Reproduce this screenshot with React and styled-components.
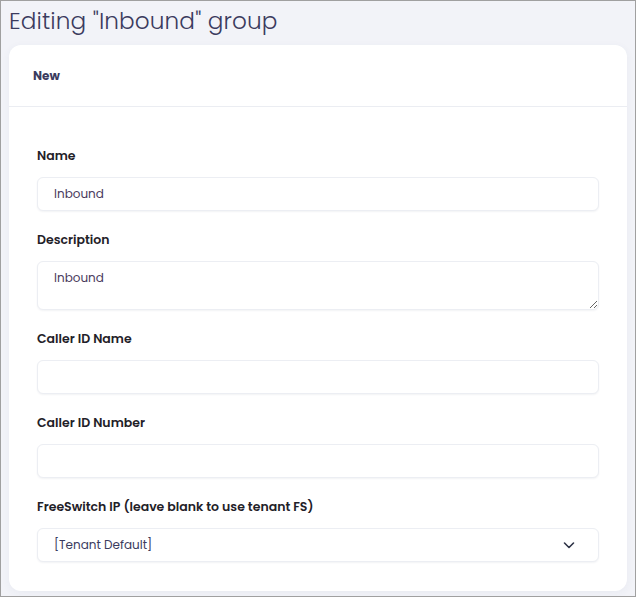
import styled, { createGlobalStyle } from 'styled-components';

const GlobalStyle = createGlobalStyle`
  html, body {
    margin: 0;
    padding: 0;
    background: #f2f3f8;
  }
  body {
    font-family: Poppins, "Noto Sans", "Open Sans", sans-serif;
  }
`;

const Page = styled.div`
  box-sizing: border-box;
  width: 636px;
  height: 597px;
  border: 1px solid #a0a0a0;
  background: #f2f3f8;
  padding: 0 8px;
  overflow: hidden;
`;

const Title = styled.h1`
  margin: 0;
  height: 44px;
  padding-top: 4px;
  box-sizing: border-box;
  font-size: 23.2px;
  font-weight: 300;
  color: #3b3b5e;
  line-height: 32px;
  letter-spacing: 0.1px;
`;

const Card = styled.div`
  background: #fff;
  border-radius: 12px;
  box-shadow: 0 2px 8px rgba(60, 70, 110, 0.05);
`;

const CardHeader = styled.div`
  height: 61px;
  display: flex;
  align-items: center;
  padding: 0 24px;
  border-bottom: 1px solid #ebedf2;
  font-size: 12px;
  font-weight: 700;
  color: #3b3b5e;
`;

const CardBody = styled.div`
  padding: 41px 28px 29px;
  display: flex;
  flex-direction: column;
`;

const Field = styled.div`
  display: flex;
  flex-direction: column;
  gap: 13px;
  margin-bottom: 21px;

  &:last-child {
    margin-bottom: 0;
  }
`;

const Label = styled.label`
  font-size: 12.5px;
  font-weight: 600;
  color: #1f2128;
  line-height: 16px;
`;

const inputBase = `
  box-sizing: border-box;
  width: 100%;
  border: 1px solid #eceef3;
  border-radius: 6px;
  background: #fff;
  box-shadow: 0 1px 2px rgba(40, 50, 90, 0.06);
  font-family: Poppins, "Noto Sans", "Open Sans", sans-serif;
  font-size: 12px;
  color: #4a3a5c;
  padding: 0 16px;
  outline: none;
`;

const Input = styled.input`
  ${inputBase}
  height: 34px;
`;

const TextArea = styled.textarea`
  ${inputBase}
  height: 49px;
  padding-top: 7px;
  line-height: 18px;
  resize: vertical;
`;

const SelectBox = styled.div`
  ${inputBase}
  height: 34px;
  display: flex;
  align-items: center;
  justify-content: space-between;
  padding-right: 22px;
  color: #3b3b5e;
`;

const Chevron = () => (
  <svg width="14" height="14" viewBox="0 0 14 14" fill="none">
    <path d="M2.5 5 L7 9.5 L11.5 5" stroke="#2e3447" strokeWidth="1.6" strokeLinecap="round" strokeLinejoin="round" />
  </svg>
);

export default function App() {
  return (
    <Page>
      <GlobalStyle />
      <Title>Editing "Inbound" group</Title>
      <Card>
        <CardHeader>New</CardHeader>
        <CardBody>
          <Field>
            <Label>Name</Label>
            <Input defaultValue="Inbound" />
          </Field>
          <Field>
            <Label>Description</Label>
            <TextArea defaultValue="Inbound" />
          </Field>
          <Field>
            <Label>Caller ID Name</Label>
            <Input />
          </Field>
          <Field>
            <Label>Caller ID Number</Label>
            <Input />
          </Field>
          <Field>
            <Label>FreeSwitch IP (leave blank to use tenant FS)</Label>
            <SelectBox>
              <span>[Tenant Default]</span>
              <Chevron />
            </SelectBox>
          </Field>
        </CardBody>
      </Card>
    </Page>
  );
}
